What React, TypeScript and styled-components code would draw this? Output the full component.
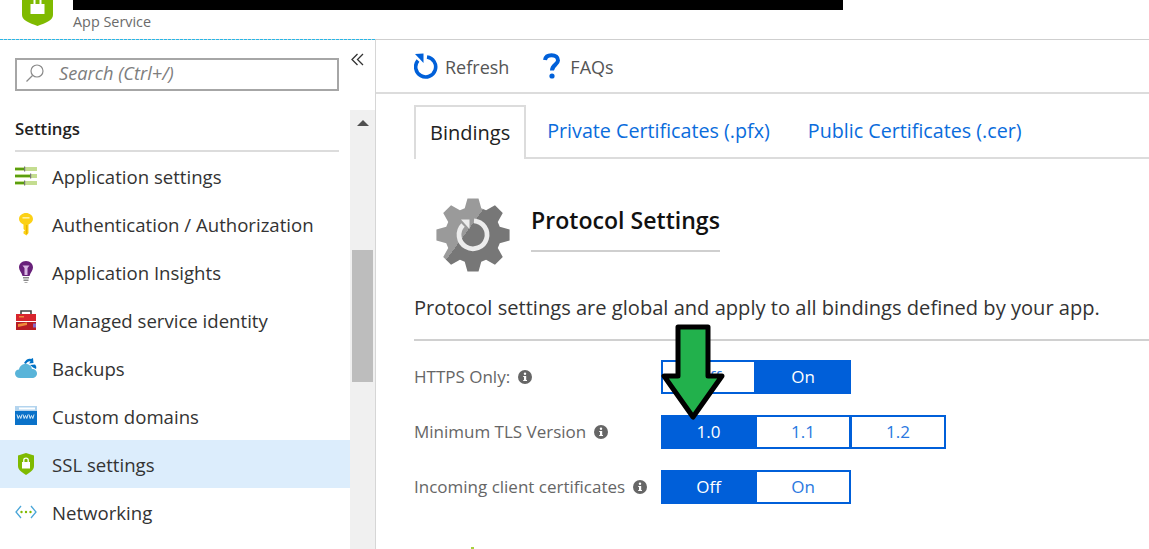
import styled, { createGlobalStyle } from 'styled-components';

const Global = createGlobalStyle`
  html, body {
    margin: 0;
    padding: 0;
    background: #fff;
  }
  body {
    font-family: "Open Sans", "Noto Sans", sans-serif;
  }
  * {
    box-sizing: border-box;
  }
`;

const Page = styled.div`
  position: relative;
  width: 1149px;
  height: 549px;
  overflow: hidden;
`;

const Header = styled.header`
  position: relative;
  display: flex;
  height: 40px;
  padding-left: 22px;
  gap: 20px;
  border-bottom: 1px solid #cfcfcf;
  &::after {
    content: '';
    position: absolute;
    left: 0;
    bottom: -1px;
    width: 376px;
    height: 1px;
    background: repeating-linear-gradient(90deg, #29b6e6 0 3px, transparent 3px 4px);
  }
`;

const TitleBlock = styled.div`
  display: flex;
  flex-direction: column;
`;

const Redacted = styled.div`
  width: 770px;
  height: 10px;
  background: #000;
`;

const Subtitle = styled.div`
  margin-top: 3px;
  font-size: 14.4px;
  line-height: 18px;
  color: #6b6b6b;
`;

const Body = styled.div`
  display: flex;
  height: 509px;
`;

const Sidebar = styled.aside`
  width: 376px;
  flex: none;
  border-right: 1px solid #d6d6d6;
  display: flex;
  flex-direction: column;
`;

const SearchRow = styled.div`
  display: flex;
  height: 70px;
  padding-left: 15px;
  padding-top: 18px;
  gap: 12px;
`;

const SearchBox = styled.div`
  display: flex;
  align-items: center;
  width: 324px;
  height: 33px;
  border: 2px solid #a6a6a6;
  padding: 0 0 3px 8px;
  gap: 14px;
  font-size: 18.2px;
  font-style: italic;
  color: #7d7d7d;
`;

const Collapse = styled.div`
  display: flex;
  margin-top: -5px;
`;

const SideScroll = styled.div`
  display: flex;
  flex: 1;
`;

const Nav = styled.nav`
  width: 350px;
  flex: none;
`;

const SectionTitle = styled.div`
  margin: 0 11px 0 15px;
  height: 42px;
  padding-top: 7px;
  border-bottom: 2px solid #dcdcdc;
  font-size: 16.8px;
  font-weight: 600;
  line-height: 24px;
  color: #222;
`;

const NavRow = styled.div<{ $active?: boolean }>`
  display: flex;
  align-items: center;
  height: 48px;
  padding-left: 15px;
  gap: 15px;
  font-size: 18.6px;
  color: #333;
  background: ${p => (p.$active ? '#dcedfc' : 'transparent')};
`;

const NavIcon = styled.svg`
  width: 22px;
  height: 24px;
  flex: none;
`;

const Scrollbar = styled.div`
  width: 25px;
  flex: none;
  background: #f0f0f0;
  display: flex;
  flex-direction: column;
  align-items: center;
  padding-top: 10px;
`;

const ScrollArrow = styled.div`
  width: 0;
  height: 0;
  border-left: 6px solid transparent;
  border-right: 6px solid transparent;
  border-bottom: 6px solid #505050;
`;

const ScrollThumb = styled.div`
  width: 21px;
  height: 132px;
  margin-top: 124px;
  background: #bdbdbd;
`;

const Main = styled.main`
  flex: 1;
  min-width: 0;
`;

const Toolbar = styled.div`
  display: flex;
  align-items: center;
  height: 54px;
  padding: 0 0 0 38px;
  border-bottom: 2px solid #dcdcdc;
  font-size: 18px;
  color: #555;
`;

const ToolItem = styled.div<{ $gap: number }>`
  display: flex;
  align-items: center;
  gap: ${p => p.$gap}px;
  margin-right: 32px;
`;

const ToolLabel = styled.span`
  margin-top: 2px;
`;

const Tabs = styled.div`
  display: flex;
  height: 54px;
  margin: 11px 0 0 38px;
  border-bottom: 2px solid #dcdcdc;
`;

const Tab = styled.div<{ $active?: boolean }>`
  display: flex;
  align-items: center;
  height: ${p => (p.$active ? '54px' : '52px')};
  padding: 0 19px 2px;
  font-size: 19.7px;
  color: #0a6cdc;
  background: #fff;
  ${p =>
    p.$active &&
    `
    padding: 0 14px 2px;
    margin-right: 2px;
    font-size: 20px;
    color: #222;
    border: 2px solid #dcdcdc;
    border-bottom: none;
  `}
`;

const Heading = styled.div`
  display: flex;
  margin: 39px 0 0 60px;
  gap: 21px;
  height: 95px;
`;

const HeadingText = styled.div`
  width: 189px;
  height: 47px;
  margin-top: 7px;
  border-bottom: 2px solid #cfcfcf;
  font-size: 23.1px;
  font-weight: 600;
  line-height: 30px;
  white-space: nowrap;
  color: #111;
`;

const Description = styled.div`
  margin: 0 0 0 38px;
  height: 48px;
  padding-top: 2px;
  border-bottom: 2px solid #d0d0d0;
  font-size: 20.1px;
  line-height: 26px;
  white-space: nowrap;
  color: #333;
`;

const Fields = styled.div`
  margin: 19px 0 0 38px;
  display: flex;
  flex-direction: column;
  gap: 21px;
`;

const FieldRow = styled.div`
  display: flex;
  align-items: center;
  height: 34px;
`;

const FieldLabel = styled.div`
  width: 247px;
  display: flex;
  align-items: center;
  gap: 8px;
  padding-bottom: 1px;
  font-size: 17px;
  color: #666;
`;

const Segments = styled.div`
  display: flex;
`;

const Segment = styled.div<{ $on?: boolean }>`
  width: 95px;
  height: 34px;
  display: flex;
  align-items: center;
  justify-content: center;
  border: 2px solid #005fd9;
  padding-bottom: 2px;
  font-size: 17px;
  color: ${p => (p.$on ? '#fff' : '#2a78e0')};
  background: ${p => (p.$on ? '#005fd9' : '#fff')};
  & + & {
    margin-left: -1px;
    width: 96px;
  }
`;

const ArrowMark = styled.svg`
  position: absolute;
  left: 655px;
  top: 320px;
  width: 76px;
  height: 106px;
`;

const CutOffSpot = styled.div`
  width: 3px;
  height: 2px;
  margin: 43px 0 0 95px;
  background: #a6d13c;
`;

const Shield = () => (
  <svg width="31" height="26" viewBox="0 0 31 26">
    <path d="M0 0H31V15C31 20 24 23 15.5 26C7 23 0 20 0 15Z" fill="#7fba00" />
    <rect x="8.5" y="4" width="14" height="10" fill="#fff" />
    <rect x="11.5" y="0" width="2" height="5" fill="#fff" />
    <rect x="17.5" y="0" width="2" height="5" fill="#fff" />
  </svg>
);

const SearchIcon = () => (
  <svg width="20" height="20" viewBox="0 0 20 20" fill="none" stroke="#8a8a8a" strokeWidth="1.2">
    <circle cx="12" cy="8" r="6" />
    <path d="M7.5 12.5L1.5 18.5" />
  </svg>
);

const ChevronsLeft = () => (
  <svg width="13" height="13" viewBox="0 0 13 13" fill="none" stroke="#333" strokeWidth="1.3">
    <path d="M6.5 1L1 6.5L6.5 12M12 1L6.5 6.5L12 12" />
  </svg>
);

const SlidersIcon = () => (
  <NavIcon viewBox="0 0 22 24">
    <rect y="3" width="22" height="4" fill="#c4dd90" />
    <rect y="10" width="22" height="4" fill="#c4dd90" />
    <rect y="17" width="22" height="4" fill="#c4dd90" />
    <rect y="4" width="9" height="2" fill="#5a9e0f" />
    <rect y="11" width="15" height="2" fill="#5a9e0f" />
    <rect y="18" width="9" height="2" fill="#5a9e0f" />
    <rect x="9" y="2.5" width="1.2" height="5" fill="#777" />
    <rect x="15" y="9.5" width="1.2" height="5" fill="#777" />
    <rect x="9" y="16.5" width="1.2" height="5" fill="#777" />
  </NavIcon>
);

const KeyIcon = () => (
  <NavIcon viewBox="0 0 22 24">
    <path d="M11 1C14.5 1 18 3.5 18 7C18 9.5 16 11.5 13.5 12.5V21L11.5 23.5L8.5 21.5V19.5L10 18.5L8.5 17V12.5C6 11.5 4 9.5 4 7C4 3.5 7.5 1 11 1Z" fill="#fcd116" />
    <rect x="7.5" y="5" width="7" height="1.6" fill="#fff0a0" />
    <rect x="11" y="13" width="1.3" height="9" fill="#e8b400" />
  </NavIcon>
);

const BulbIcon = () => (
  <NavIcon viewBox="0 0 22 24">
    <path d="M11 1C15.5 1 18 4 18 7.5C18 10.5 15.5 12.5 14.5 16H7.5C6.5 12.5 4 10.5 4 7.5C4 4 6.5 1 11 1Z" fill="#68217a" />
    <path d="M7.5 5.5H14.5L12.5 8V15H9.5V8Z" fill="#d9b8e3" />
    <rect x="8" y="17" width="6" height="1.5" fill="#888" />
    <rect x="8.5" y="19.5" width="5" height="1.5" fill="#888" />
    <rect x="9.5" y="22" width="3" height="1" fill="#aaa" />
  </NavIcon>
);

const ToolboxIcon = () => (
  <NavIcon viewBox="0 0 22 24">
    <path d="M6 7V3H16V7" fill="none" stroke="#444" strokeWidth="1.6" />
    <rect x="1" y="6" width="20" height="7" fill="#d8252d" />
    <rect x="1" y="14" width="20" height="8" fill="#b81c24" />
    <path d="M3 16L12 14.5V17L3 19Z" fill="#f0883a" />
    <rect x="4" y="8" width="5" height="1.5" fill="#f0883a" />
    <rect x="18" y="15.5" width="3" height="4" fill="#8a6bc8" />
  </NavIcon>
);

const CloudIcon = () => (
  <NavIcon viewBox="0 0 22 24">
    <path d="M5 22C2 22 0 20 0 17.5C0 15 2 13.5 4 13.5C4.5 10 7.5 8 10.5 8C14 8 16.5 10 17 13C20 13 22 15 22 17.5C22 20 20 22 17 22Z" fill="#59b4d9" />
    <path d="M9 7C11 3 14 2 16 3L18 2L18.5 7L14 7.5L15.5 5.5C14 5 12 6 11 8Z" fill="#0072c6" />
    <path d="M15 9L20 8.5C21.5 10 21.5 11.5 21 13L18 11.5Z" fill="#0072c6" />
  </NavIcon>
);

const WwwIcon = () => (
  <NavIcon viewBox="0 0 22 24">
    <rect y="2" width="22" height="19" fill="#0a72c9" />
    <rect y="2" width="22" height="5" fill="#b3d4ee" />
    <rect x="4" y="3.5" width="16" height="2" fill="#fff" />
    <path d="M2 10.5L3.2 14.5L4.5 11.5L5.8 14.5L7 10.5M8 10.5L9.2 14.5L10.5 11.5L11.8 14.5L13 10.5M14 10.5L15.2 14.5L16.5 11.5L17.8 14.5L19 10.5" fill="none" stroke="#d6ebf9" strokeWidth="1" />
  </NavIcon>
);

const LockShieldIcon = () => (
  <NavIcon viewBox="0 0 22 24">
    <path d="M11 1L19 3.5V14C19 18 15 20.5 11 23C7 20.5 3 18 3 14V3.5Z" fill="#7fba00" />
    <rect x="7" y="10" width="8" height="6.5" fill="#fff" />
    <path d="M8.8 10V8C8.8 5.5 13.2 5.5 13.2 8V10" fill="none" stroke="#fff" strokeWidth="1.3" />
  </NavIcon>
);

const NetworkIcon = () => (
  <NavIcon viewBox="0 0 22 24">
    <path d="M6 6L1 12L6 18M16 6L21 12L16 18" fill="none" stroke="#4aa6d8" strokeWidth="1.3" />
    <circle cx="6.5" cy="12" r="1.2" fill="#7fba00" />
    <circle cx="11" cy="12" r="1.2" fill="#7fba00" />
    <circle cx="15.5" cy="12" r="1.2" fill="#7fba00" />
  </NavIcon>
);

const RefreshIcon = () => (
  <svg width="24" height="26" viewBox="0 0 24 26" fill="none">
    <path d="M13 4A10 10 0 1 1 4 7.5" stroke="#0060d9" strokeWidth="3.6" />
    <path d="M1 1L9.5 0.5V10Z" fill="#0060d9" />
  </svg>
);

const QuestionIcon = () => (
  <svg width="20" height="26" viewBox="-2 0 20 26" fill="none">
    <path d="M2 7C2.5 3.8 5 2.2 8.5 2.2C12.5 2.2 15 4.2 15 7.5C15 11.5 9 12 9 17.5" stroke="#0060d9" strokeWidth="4" />
    <circle cx="9" cy="23" r="2.6" fill="#0060d9" />
  </svg>
);

// eight-toothed outline for the section gear
function gearPath(cx: number, cy: number, outer: number, inner: number) {
  const pts: string[] = [];
  for (let i = 0; i < 8; i++) {
    const a = (i * Math.PI) / 4 - Math.PI / 2;
    [
      [-0.3, inner],
      [-0.15, outer],
      [0.15, outer],
      [0.3, inner],
    ].forEach(([d, r]) => {
      pts.push(`${(cx + Math.cos(a + d) * r).toFixed(2)} ${(cy + Math.sin(a + d) * r).toFixed(2)}`);
    });
  }
  return `M${pts.join('L')}Z`;
}

const GearIcon = () => (
  <svg width="74" height="76" viewBox="0 0 74 76" style={{ flex: 'none' }}>
    <defs>
      <linearGradient id="gear" x1="0.1" y1="0.1" x2="0.85" y2="0.65">
        <stop offset="0.5" stopColor="#9a9a9a" />
        <stop offset="0.5" stopColor="#777" />
      </linearGradient>
    </defs>
    <path d={gearPath(37, 37, 37, 28)} fill="url(#gear)" />
    <path d="M38 22.8A14 14 0 1 1 27 27" fill="none" stroke="#ececec" strokeWidth="4.8" />
    <path d="M25 21.5H33.5V31Z" fill="#ececec" />
  </svg>
);

const InfoIcon = () => (
  <svg width="14" height="14" viewBox="0 0 14 14" style={{ flex: 'none' }}>
    <circle cx="7" cy="7" r="7" fill="#666" />
    <rect x="6" y="6" width="2.2" height="5" fill="#fff" />
    <rect x="5.2" y="6" width="1.5" height="1" fill="#fff" />
    <rect x="5.2" y="10" width="3.8" height="1" fill="#fff" />
    <circle cx="7" cy="3.8" r="1.2" fill="#fff" />
  </svg>
);

const navItems = [
  { label: 'Application settings', icon: <SlidersIcon /> },
  { label: 'Authentication / Authorization', icon: <KeyIcon /> },
  { label: 'Application Insights', icon: <BulbIcon /> },
  { label: 'Managed service identity', icon: <ToolboxIcon /> },
  { label: 'Backups', icon: <CloudIcon /> },
  { label: 'Custom domains', icon: <WwwIcon /> },
  { label: 'SSL settings', icon: <LockShieldIcon />, active: true },
  { label: 'Networking', icon: <NetworkIcon /> },
];

const fields = [
  { label: 'HTTPS Only:', options: ['Off', 'On'], on: 1 },
  { label: 'Minimum TLS Version', options: ['1.0', '1.1', '1.2'], on: 0 },
  { label: 'Incoming client certificates', options: ['Off', 'On'], on: 0 },
];

export default function App() {
  return (
    <Page>
      <Global />
      <Header>
        <Shield />
        <TitleBlock>
          <Redacted />
          <Subtitle>App Service</Subtitle>
        </TitleBlock>
      </Header>
      <Body>
        <Sidebar>
          <SearchRow>
            <SearchBox>
              <SearchIcon />
              Search (Ctrl+/)
            </SearchBox>
            <Collapse>
              <ChevronsLeft />
            </Collapse>
          </SearchRow>
          <SideScroll>
            <Nav>
              <SectionTitle>Settings</SectionTitle>
              {navItems.map(item => (
                <NavRow key={item.label} $active={item.active}>
                  {item.icon}
                  <span>{item.label}</span>
                </NavRow>
              ))}
            </Nav>
            <Scrollbar>
              <ScrollArrow />
              <ScrollThumb />
            </Scrollbar>
          </SideScroll>
        </Sidebar>
        <Main>
          <Toolbar>
            <ToolItem $gap={7}>
              <RefreshIcon />
              <ToolLabel>Refresh</ToolLabel>
            </ToolItem>
            <ToolItem $gap={9}>
              <QuestionIcon />
              <ToolLabel>FAQs</ToolLabel>
            </ToolItem>
          </Toolbar>
          <Tabs>
            <Tab $active>Bindings</Tab>
            <Tab>Private Certificates (.pfx)</Tab>
            <Tab>Public Certificates (.cer)</Tab>
          </Tabs>
          <Heading>
            <GearIcon />
            <HeadingText>Protocol Settings</HeadingText>
          </Heading>
          <Description>Protocol settings are global and apply to all bindings defined by your app.</Description>
          <Fields>
            {fields.map(field => (
              <FieldRow key={field.label}>
                <FieldLabel>
                  {field.label}
                  <InfoIcon />
                </FieldLabel>
                <Segments>
                  {field.options.map((option, i) => (
                    <Segment key={option} $on={i === field.on}>
                      {option}
                    </Segment>
                  ))}
                </Segments>
              </FieldRow>
            ))}
          </Fields>
          <CutOffSpot />
        </Main>
      </Body>
      <ArrowMark viewBox="0 0 76 106">
        <path d="M23 7H53V56H67L38 97L9 56H23Z" fill="#22b14c" stroke="#000" strokeWidth="5" strokeLinejoin="round" />
      </ArrowMark>
    </Page>
  );
}
